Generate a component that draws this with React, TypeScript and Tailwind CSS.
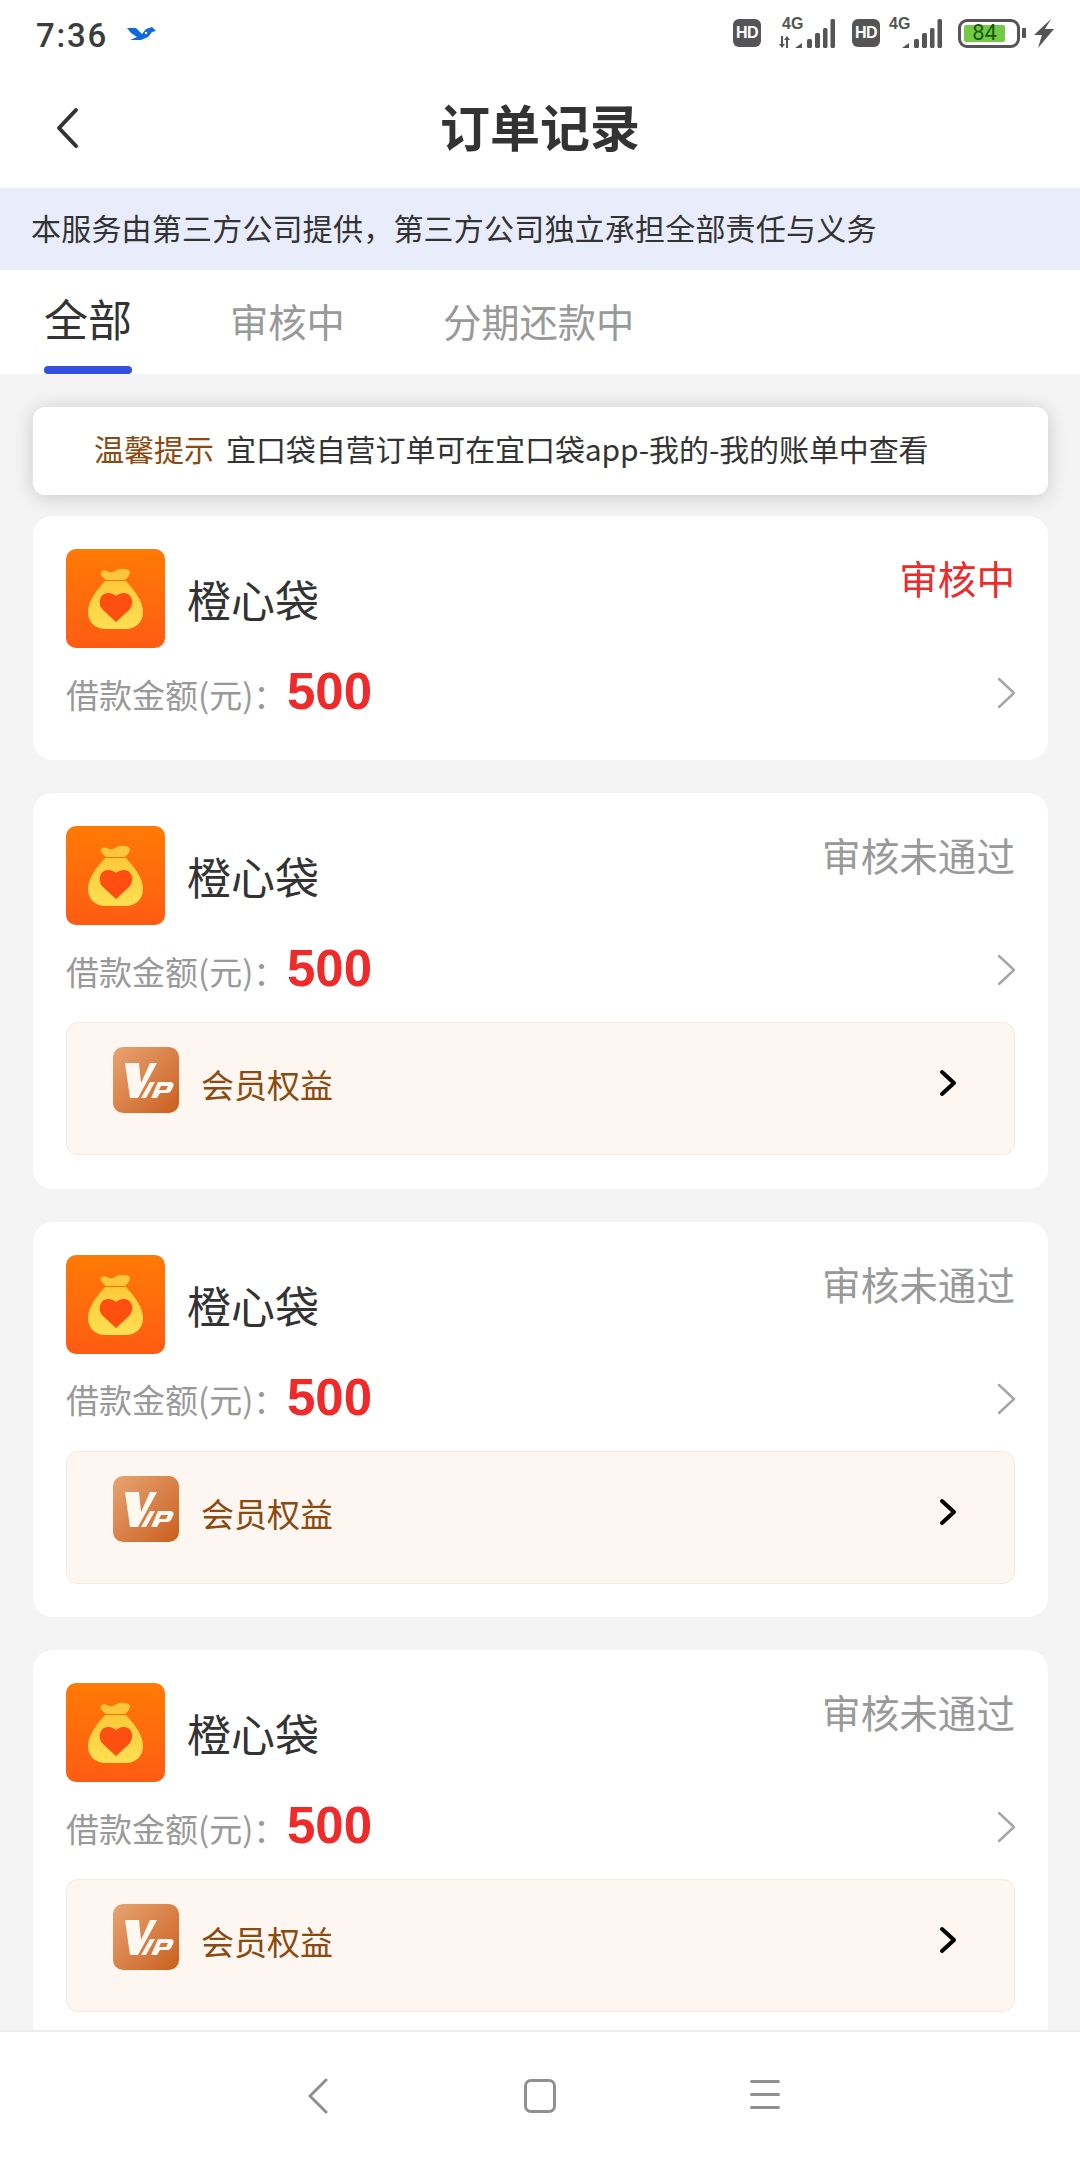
import React from "react";

const cjk = "font-['Noto_Sans_CJK_SC','Noto_Sans',sans-serif]";

function Signal() {
  return (
    <svg width="40" height="29" viewBox="0 0 40 29" fill="#555">
      <path d="M0 29 L7 24 V29Z" />
      <rect x="12" y="20" width="5" height="9" rx="1.5" />
      <rect x="20" y="14" width="5" height="15" rx="1.5" />
      <rect x="28" y="9" width="4.5" height="20" rx="1.5" />
      <rect x="35.5" y="0" width="4.5" height="29" rx="1.5" />
    </svg>
  );
}

function HD() {
  return (
    <div className="w-[28px] h-[28px] rounded-[6px] bg-[#555] flex items-center justify-center text-white text-[16px] font-bold font-['Liberation_Sans',sans-serif] leading-none tracking-[-0.5px]">
      HD
    </div>
  );
}

function StatusBar() {
  return (
    <div className="h-[70px] flex items-center bg-white pl-[36px] pr-[26px] shrink-0">
      <span className="text-[33px] font-medium text-[#3c3c3c] font-['Roboto',sans-serif] tracking-[1.8px] leading-none">7:36</span>
      <svg className="ml-[19px] mt-[-2px]" width="30" height="14" viewBox="0 0 30 14">
        <path d="M0 1 L9 1 L15 7 L19 2 L25 0 L29 4 L25 5 L21 10 L14 13 L3 13 L10 10 L4 6 Z" fill="#0f69d8" />
        <circle cx="19" cy="6" r="1.2" fill="#fff" />
      </svg>
      <div className="ml-auto flex items-center mt-[-4px]">
        <HD />
        <div className="relative ml-[17px] w-[57px] h-[29px]">
          <span className="absolute left-[4px] top-[-3px] text-[16px] font-semibold leading-[16px] text-[#555] font-['Liberation_Sans',sans-serif]">4G</span>
          <svg className="absolute left-0 bottom-0" width="13" height="12" viewBox="0 0 13 12" fill="#555">
            <path d="M3 0 H5 V8 H7 L4 12 L1 8 H3 Z" />
            <path d="M8 12 H10 V4 H12 L9 0 L6 4 H8 Z" />
          </svg>
          <div className="absolute right-0 bottom-0 flex">
            <Signal />
          </div>
        </div>
        <div className="ml-[17px]">
          <HD />
        </div>
        <div className="relative ml-[9px] w-[53px] h-[29px]">
          <span className="absolute left-0 top-[-3px] text-[16px] font-semibold leading-[16px] text-[#555] font-['Liberation_Sans',sans-serif]">4G</span>
          <div className="absolute right-0 bottom-0 flex">
            <Signal />
          </div>
        </div>
        <div className="ml-[16px] w-[62px] h-[29px] rounded-[9px] border-[3.5px] border-[#555] p-[3px] flex">
          <div className="w-[41px] h-full rounded-[2px] bg-[#74c946] text-[#1a5a10] text-[22px] leading-[16px] text-center font-['Roboto',sans-serif]">84</div>
        </div>
        <div className="ml-[2px] w-[4px] h-[10px] rounded-[1px] bg-[#555]" />
        <svg className="ml-[8px]" width="20" height="29" viewBox="0 0 20 29" fill="#555">
          <path d="M17 0 L0 16 H8 L4 29 L20 10 H11 Z" />
        </svg>
      </div>
    </div>
  );
}

function Header() {
  return (
    <div className="relative h-[118px] flex items-center justify-center bg-white shrink-0 pb-[8px]">
      <svg className="absolute left-[52px] top-[36px]" width="36" height="44" viewBox="0 0 36 44" fill="none">
        <path d="M24 4 L7 22 L24 40" stroke="#333" strokeWidth="4" strokeLinecap="round" strokeLinejoin="round" />
      </svg>
      <span className={`${cjk} text-[50px] font-bold text-[#333] leading-none`}>订单记录</span>
    </div>
  );
}

function Notice() {
  return (
    <div className={`${cjk} h-[82px] shrink-0 bg-[#e9edfb] flex items-center pl-[31px] pb-[4px] text-[30px] tracking-[0.2px] text-[#333]`}>
      本服务由第三方公司提供，第三方公司独立承担全部责任与义务
    </div>
  );
}

function Tabs() {
  return (
    <div className={`${cjk} h-[104px] shrink-0 bg-white flex items-start pl-[44px]`}>
      <div className="relative w-[88px] h-full flex justify-center">
        <span className="text-[44px] text-[#333] leading-none mt-[26px] whitespace-nowrap">全部</span>
        <div className="absolute bottom-0 left-0 w-[88px] h-[8px] rounded-[4px] bg-[#3450e0]" />
      </div>
      <span className="ml-[98px] text-[38.3px] text-[#999] leading-none mt-[32px]">审核中</span>
      <span className="ml-[98px] text-[38.3px] text-[#999] leading-none mt-[32px]">分期还款中</span>
    </div>
  );
}

function Logo() {
  return (
    <div className="w-[99px] h-[99px] shrink-0 rounded-[10px] bg-gradient-to-b from-[#ff7a05] to-[#fe5b12] flex items-center justify-center">
      <svg width="55" height="61" viewBox="0 0 55 61">
        <defs>
          <linearGradient id="bag" x1="0" y1="0" x2="0" y2="1">
            <stop offset="0" stopColor="#ffc93a" />
            <stop offset="1" stopColor="#ffdf52" />
          </linearGradient>
        </defs>
        <path d="M14 3 Q17 1 21 4 Q24 5 27 3 Q31 0 36 1 Q42 1 42 5 Q41 9 37 12 H18 Q14 9 13 7 Q12 4 14 3 Z" fill="#ffc63c" />
        <path d="M17 13 H38 C47 23 55 33 55 44 C55 55 47 61 37 61 H18 C8 61 0 55 0 44 C0 33 8 23 17 13 Z" fill="url(#bag)" />
        <path d="M28 54 L15 42 C9 36 12 25 20 25 C24 25 27 27 28 28 C29 27 32 25 36 25 C44 25 47 36 41 42 Z" fill="#ff4f10" />
      </svg>
    </div>
  );
}

function Vip() {
  return (
    <div className="w-[66px] h-[66px] shrink-0 rounded-[10px] bg-gradient-to-br from-[#e8a470] to-[#c95e1a] flex">
      <svg width="66" height="66" viewBox="0 0 66 66" fill="#fff8f0">
        <path d="M12 16 H26 L28 36 L37 16 H44 L25 51 H17 Z" />
        <path d="M37 35 H42 L33 51 H28 Z" />
        <path fillRule="evenodd" d="M45 35 H58 Q62 36 60 40 L58 44 Q57 46 54 46 H47 L44 51 H38 Z M48 39 L46 43 H53 L55 39 Z" />
      </svg>
    </div>
  );
}

function Chevron() {
  return (
    <svg width="20" height="32" viewBox="0 0 20 32" fill="none">
      <path d="M3 2 L18 16 L3 30" stroke="#a6a6a6" strokeWidth="2.4" strokeLinecap="round" strokeLinejoin="round" />
    </svg>
  );
}

function Card({ status, red, vip }: { status: string; red?: boolean; vip?: boolean }) {
  return (
    <div className={`bg-white rounded-[20px] pt-[33px] px-[33px] ${vip ? "pb-[33.6px]" : "pb-[37px]"}`}>
      <div className="flex items-start">
        <Logo />
        <span className="ml-[22px] self-center text-[44px] text-[#333] leading-none mt-[1px]">橙心袋</span>
        <span className={`ml-auto text-[38.6px] leading-none mt-[9px] ${red ? "text-[#ee2a2a]" : "text-[#999]"}`}>{status}</span>
      </div>
      <div className={`mt-[15px] h-[60px] flex items-center ${vip ? "mb-[22px]" : ""}`}>
        <span className="text-[33px] text-[#999] leading-none w-[221px] mt-[2px] whitespace-nowrap">借款金额(元)：</span>
        <span className="text-[51px] font-bold text-[#ee2a2a] leading-none font-['Liberation_Sans',sans-serif] mt-[-3px]">500</span>
        <div className="ml-auto mr-[-1px] flex">
          <Chevron />
        </div>
      </div>
      {vip && (
        <div className="h-[133px] rounded-[12px] border border-[#f9e9df] bg-[#fef6f0] flex items-start pl-[46px] pr-[58px] pt-[24px]">
          <Vip />
          <span className="ml-[22px] mt-[21px] text-[33px] text-[#8a4a10] leading-none">会员权益</span>
          <svg className="ml-auto mt-[22px] mr-[-3px]" width="20" height="28" viewBox="0 0 20 28" fill="none">
            <path d="M3 3 L15 14 L3 25" stroke="#000" strokeWidth="4" strokeLinecap="round" strokeLinejoin="round" />
          </svg>
        </div>
      )}
    </div>
  );
}

function BottomNav() {
  return (
    <div className="h-[130px] shrink-0 bg-white border-t-2 border-[#ececec] flex items-start">
      <svg className="ml-[308px] mt-[46px]" width="20" height="36" viewBox="0 0 20 36" fill="none">
        <path d="M18 2 L2 18 L18 34" stroke="#909090" strokeWidth="3" strokeLinecap="round" strokeLinejoin="round" />
      </svg>
      <div className="ml-[196px] mt-[47px] w-[32px] h-[34px] rounded-[7px] border-[3.5px] border-[#909090]" />
      <div className="ml-[194px] mt-[48px] w-[30px] flex flex-col gap-[10px]">
        <div className="h-[3px] bg-[#909090] rounded-full" />
        <div className="h-[3px] bg-[#909090] rounded-full" />
        <div className="h-[3px] bg-[#909090] rounded-full" />
      </div>
    </div>
  );
}

export default function App() {
  return (
    <div className={`${cjk} w-[1080px] h-[2160px] flex flex-col overflow-hidden bg-[#f4f4f5]`}>
      <StatusBar />
      <Header />
      <Notice />
      <Tabs />
      <div className="flex-1 min-h-0 overflow-hidden pl-[33px] pr-[32px] pt-[33px] flex flex-col">
        <div className="h-[88px] shrink-0 bg-white rounded-[12px] shadow-[0_2px_20px_rgba(0,0,0,0.18)] flex items-center pl-[61px] pb-[7px] text-[30px] leading-none text-[#333] whitespace-nowrap">
          <span className="text-[#8a4a10]">温馨提示</span>
          <span className="ml-[12px] tracking-[-0.1px]">宜口袋自营订单可在宜口袋app-我的-我的账单中查看</span>
        </div>
        <div className="mt-[21px] flex flex-col gap-[33px]">
          <Card status="审核中" red />
          <Card status="审核未通过" vip />
          <Card status="审核未通过" vip />
          <Card status="审核未通过" vip />
        </div>
      </div>
      <BottomNav />
    </div>
  );
}
